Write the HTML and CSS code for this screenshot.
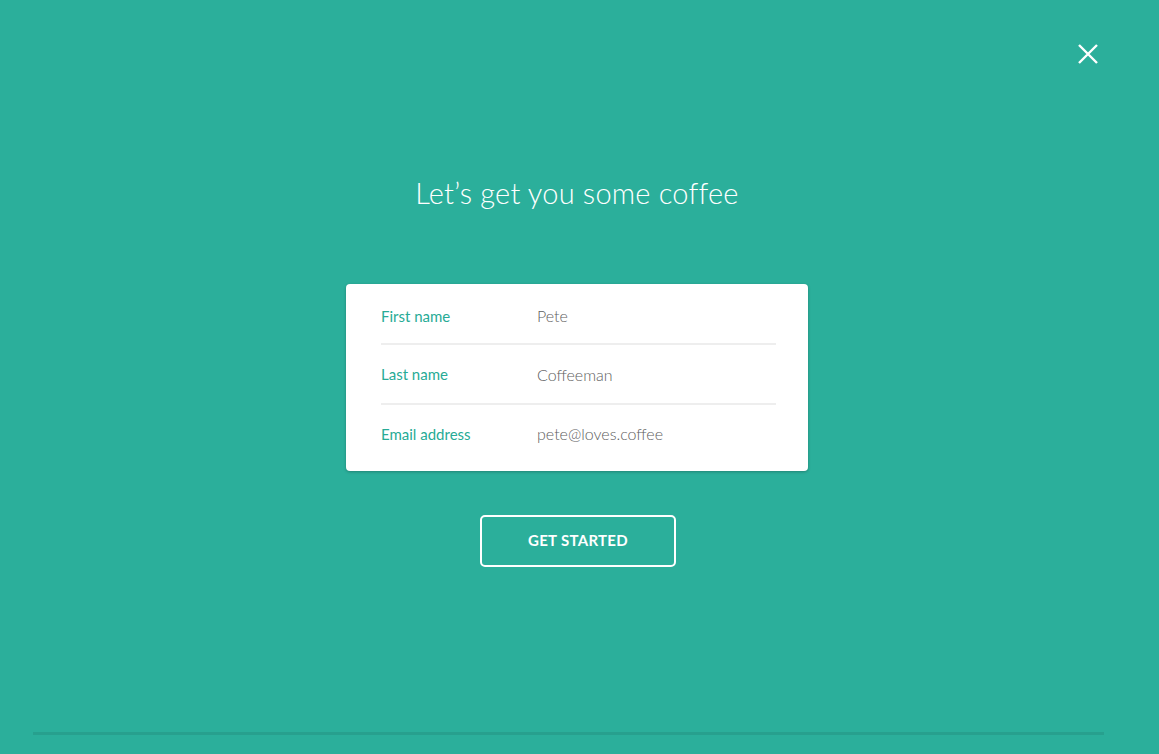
FILE: index.html
```html
<!DOCTYPE html>
<html>
<head>
<meta charset="utf-8">
<link rel="stylesheet" href="styles.css">
</head>
<body>
<div class="page">
  <header class="topbar">
    <button class="close" aria-label="Close">
      <svg width="22" height="22" viewBox="0 0 22 22"><path d="M2 2 L20 20 M20 2 L2 20" stroke="#fff" stroke-width="2.4" fill="none"/></svg>
    </button>
  </header>
  <main class="content">
    <h1 class="title">Let’s get you some coffee</h1>
    <div class="card">
      <div class="row"><span class="label">First name</span><span class="value">Pete</span></div>
      <div class="row"><span class="label">Last name</span><span class="value">Coffeeman</span></div>
      <div class="row"><span class="label">Email address</span><span class="value">pete@loves.coffee</span></div>
    </div>
    <button class="cta">GET STARTED</button>
  </main>
  <footer class="footer"><div class="rule"></div></footer>
</div>
</body>
</html>
```
FILE: styles.css
```css
* { box-sizing: border-box; }
html, body { margin: 0; padding: 0; height: 100%; }
body {
  background: #2baf9b;
  font-family: "Lato", "Open Sans", sans-serif;
  color: #fff;
}
.page {
  height: 754px;
  display: flex;
  flex-direction: column;
}
.topbar {
  display: flex;
  justify-content: flex-end;
  padding: 43px 60px 0 0;
}
.close {
  background: none;
  border: 0;
  padding: 0;
  width: 22px;
  height: 22px;
  cursor: pointer;
}
.close svg { display: block; }
.content {
  flex: 1;
  display: flex;
  flex-direction: column;
  align-items: center;
  padding-right: 5px;
}
.title {
  margin: 108px 0 0 0;
  font-weight: 300;
  font-size: 29px;
  line-height: 40px;
  color: #fff;
  letter-spacing: 0.2px;
}
.card {
  margin-top: 71px;
  width: 462px;
  background: #fff;
  border-radius: 4px;
  box-shadow: 0 1px 3px rgba(0,0,0,0.25);
  padding: 0 32px 0 35px;
}
.row {
  display: flex;
  align-items: center;
  height: 60px;
  border-bottom: 2px solid #eeeeee;
  font-size: 16px;
  font-weight: 300;
}
.row:first-child { height: 61px; padding-top: 4px; }
.row:last-child { border-bottom: 0; height: 66px; padding-bottom: 9px; }
.label {
  width: 156px;
  color: #27ab96;
  font-size: 15px;
  font-weight: 400;
}
.value {
  color: #5e5e5e;
}
.cta {
  margin-top: 44px;
  margin-left: 2px;
  width: 196px;
  height: 52px;
  background: transparent;
  border: 2px solid #fff;
  border-radius: 5px;
  color: #fff;
  font-family: "Lato", sans-serif;
  font-weight: 700;
  font-size: 15px;
  letter-spacing: 0.3px;
  padding: 0 0 3px 0;
}
.footer {
  padding: 0 55px 19px 33px;
}
.rule {
  height: 3px;
  background: #27a08e;
}
```
